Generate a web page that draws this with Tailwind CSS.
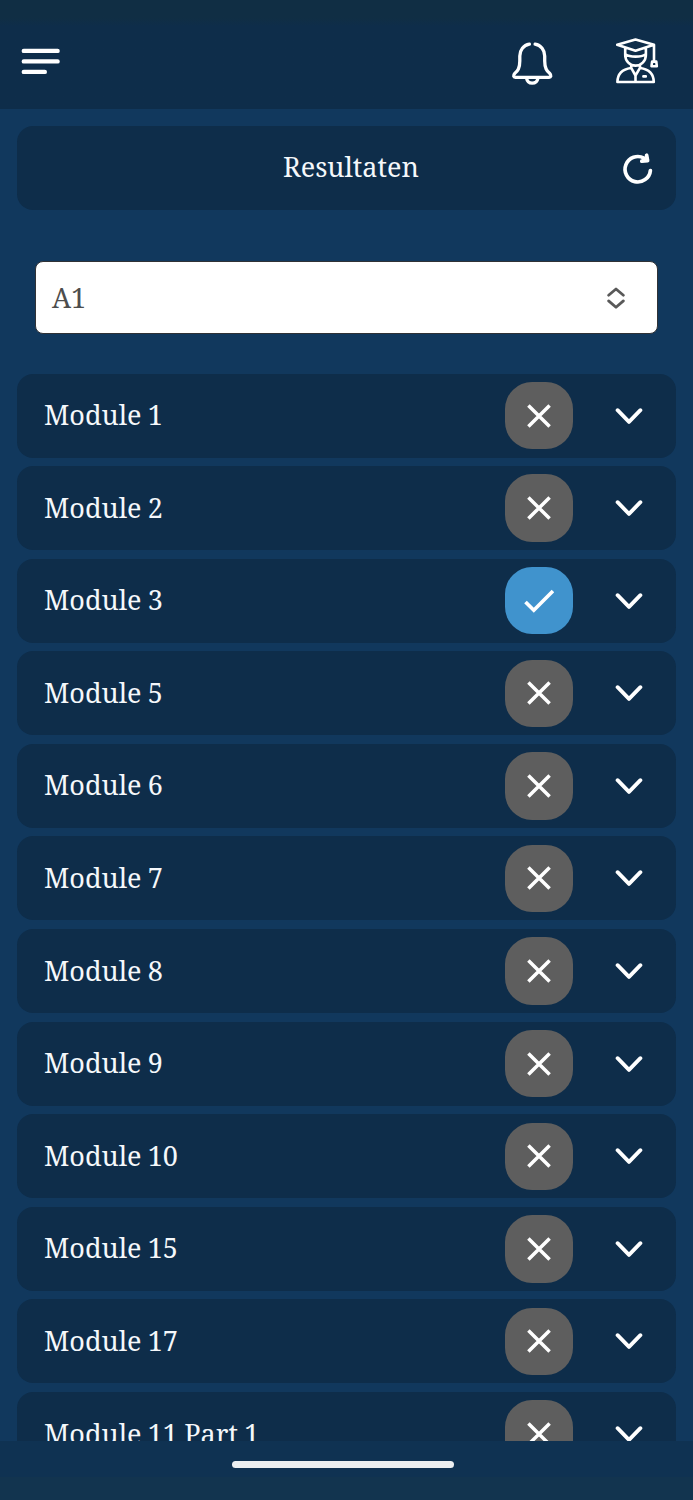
<!DOCTYPE html>
<html lang="nl">
<head>
<meta charset="utf-8">
<title>Resultaten</title>
<script src="https://cdn.jsdelivr.net/npm/@tailwindcss/browser@4"></script>
</head>
<body class="relative flex h-[1500px] w-[693px] flex-col overflow-hidden bg-[#11385d] font-['Noto_Serif','DejaVu_Serif_Condensed','DejaVu_Serif',serif] text-[27px] leading-none text-[#f5f8fb]">
<svg class="hidden">
  <symbol id="cross" viewBox="0 0 24 24"><path d="M1.4 1.4 22.6 22.6M22.6 1.4 1.4 22.6" fill="none" stroke="#fff" stroke-width="3.5"/></symbol>
  <symbol id="check" viewBox="0 0 30 24"><path d="M1.5 13 9.8 21.2 29 2" fill="none" stroke="#fff" stroke-width="3.7"/></symbol>
  <symbol id="down" viewBox="0 0 28 18"><path d="M2.6 3.2 14 14.9 25.4 3.2" fill="none" stroke="#fff" stroke-width="3.8" stroke-linecap="round" stroke-linejoin="round"/></symbol>
</svg>
<header class="flex h-[109px] shrink-0 items-start bg-linear-to-b from-[#102e44] from-[18px] to-[#0e2d4a] to-[26px]">
  <svg class="ml-[20px] mt-[44px] h-[34px] w-[42px]" viewBox="0 0 42 34" fill="none" stroke="#fff" stroke-width="4.4" stroke-linecap="round"><path d="M3.8 6.9H37.6M3.8 17.4H37.6M3.8 27.9H24.8"/></svg>
  <svg class="ml-[448px] mt-[38px] h-[50px] w-[44px]" viewBox="510 38 44 50" fill="none" stroke="#fff" stroke-width="3.3" stroke-linecap="round" stroke-linejoin="round"><path d="M529.4 44.2C523.5 45.2 519.8 50 519.8 56V61C519.8 69 517.2 71 514.8 73.4C512.8 75.6 513.6 77.3 515.4 77.3H549.1C550.9 77.3 551.7 75.6 549.7 73.4C547.3 71 544.7 69 544.7 61V56C544.7 50 541 45.2 535.1 44.2M526.5 78C527.1 81.4 529.2 83.2 532.2 83.2S537.4 81.4 538 78"/></svg>
  <svg class="ml-[58px] mt-[36px] h-[50px] w-[48px]" viewBox="612 36 48 50" fill="none" stroke="#fff" stroke-width="2.6" stroke-linecap="round" stroke-linejoin="round">
    <path d="M617.2 44.8 635.5 39.6 654 44.8 635.5 50.8ZM625.2 48V55C625.2 61 630 65.6 635.5 65.6S645.9 61 645.9 55V48M625.4 54.2C630 57.4 641 57.4 645.7 54.2M654 45V60.5M651.5 66.2H656.8L656.3 61.6H652.1ZM631.2 65V67.8L635.5 75.5 640 67.8V65M631 68C622 69.2 617.6 73.5 617.4 82H653.8C653.6 73.5 649 69.2 640.2 68M635.5 75V81.5M643.4 76.4H645.8"/>
  </svg>
</header>
<main class="flex min-h-0 flex-1 flex-col overflow-hidden px-[17px]">
  <section class="mt-[16.5px] flex h-[84px] shrink-0 items-center rounded-[16px] bg-[#0e2d4a]">
    <h1 class="ml-[266px] w-[338px]"><span class="relative -top-px whitespace-nowrap">Resultaten</span></h1>
    <svg class="relative top-px h-[34px] w-[34px]" viewBox="621 152 34 34" fill="none" stroke="#fff" stroke-width="3.7" stroke-linecap="round" stroke-linejoin="round"><path d="M650.4 170.5A12.7 12.7 0 1 1 644 158.2L647.6 160.4M646.6 155.2 647.6 160.6 641.8 161.2"/></svg>
  </section>
  <div class="mx-[18px] mt-[51.5px] flex h-[73px] shrink-0 items-center justify-between rounded-[8px] border border-[#303236] bg-white pl-[16px] pr-[30px] text-[#4d4d4d]">
    <span class="block whitespace-nowrap">A1</span>
    <svg class="relative top-[0.7px] h-[24px] w-[22px]" viewBox="0 0 22 24" fill="none" stroke="#595959" stroke-width="2.8" stroke-linecap="round" stroke-linejoin="round"><path d="M3.6 9.2 11 3 18.4 9.2M3.6 14.9 11 21.2 18.4 14.9"/></svg>
  </div>
  <ul id="list" class="mt-[39.5px] flex flex-col gap-[8.6px]"></ul>
</main>
<footer class="flex h-[59px] shrink-0 flex-col bg-[#0f3252]">
  <div class="mt-[20px] ml-[231.5px] h-[7px] w-[222.5px] shrink-0 rounded-full bg-[#eceff1]"></div>
  <div class="mt-[9px] flex-1 bg-[#12344f]"></div>
</footer>
<script>
const modules = ["1", "2", "3", "5", "6", "7", "8", "9", "10", "15", "17", "11 Part 1"];
document.getElementById("list").innerHTML = modules.map(m => `
<li class="flex h-[84px] shrink-0 items-center rounded-[16px] bg-[#0e2d4a] pl-[27px] pr-[33px]">
  <span class="relative -top-px flex-1 whitespace-nowrap [word-spacing:-0.7px]">Module ${m}</span>
  <span class="${m === "3" ? "flex h-[67.5px] w-[67.5px] items-center justify-center rounded-[27px] bg-[#4093cd]" : "flex h-[67.5px] w-[67.5px] items-center justify-center rounded-[27px] bg-[#5e5e5e]"}">
    ${m === "3" ? '<svg class="h-[24px] w-[30px]"><use href="#check"/></svg>' : '<svg class="h-[24px] w-[24px]"><use href="#cross"/></svg>'}
  </span>
  <svg class="ml-[42.2px] h-[18px] w-[28px]"><use href="#down"/></svg>
</li>`).join("");
</script>
</body>
</html>
